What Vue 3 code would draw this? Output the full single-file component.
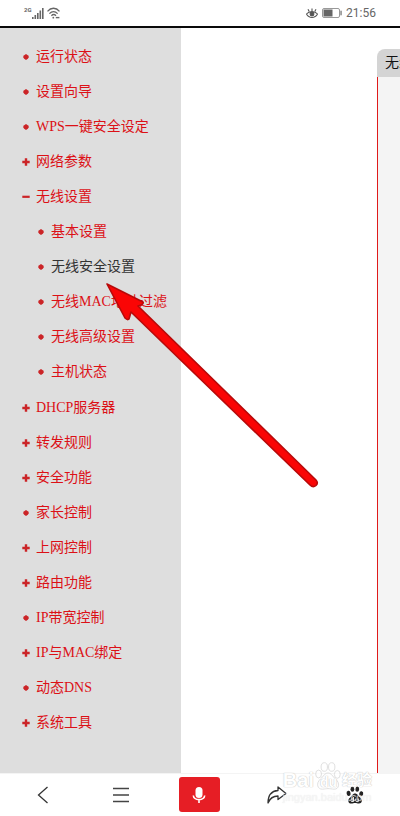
<template>
  <div class="screen">
    <header class="status-bar">
      <div class="status-left">
        <span class="net">2G</span>
        <svg class="signal" width="12" height="11" viewBox="0 0 12 11" fill="#666">
          <rect x="0" y="9" width="1.6" height="2" />
          <rect x="2.5" y="7" width="1.6" height="4" />
          <rect x="5" y="5" width="1.6" height="6" />
          <rect x="7.5" y="2.5" width="1.6" height="8.5" />
          <rect x="10" y="0" width="1.6" height="11" />
        </svg>
        <svg class="wifi" width="14" height="12" viewBox="0 0 14 12" fill="none" stroke="#666" stroke-width="1.3">
          <path d="M.5 4.3C4 .2 9 .2 12.5 4.3" />
          <path d="M2.4 6.6C4.9 4 8.1 4 10.6 6.6" />
          <path d="M4.4 8.7C5.8 7.3 7.6 7.3 9 8.7" />
          <circle cx="6.3" cy="10.7" r=".9" fill="#666" stroke="none" />
          <path d="M8.8 10.6h3.6" stroke-width="1.4" />
        </svg>
      </div>
      <div class="status-right">
        <svg class="eye" width="12" height="11" viewBox="0 0 12 11" fill="none" stroke="#555" stroke-width="1.1">
          <path d="M.5 6C3 2.8 9 2.8 11.5 6C9 10.6 3 10.6 .5 6z" />
          <circle cx="6" cy="6" r="1.9" fill="#555" />
          <path d="M6 3V.4M3.2 3.4L2 1.3M8.8 3.4L10 1.3" />
        </svg>
        <svg class="battery" width="20" height="10" viewBox="0 0 20 10">
          <rect x=".5" y=".5" width="17" height="9" rx="1.5" fill="#fff" stroke="#999" />
          <rect x="1.5" y="1.5" width="9" height="7" fill="#666" />
          <rect x="18.4" y="2.7" width="1.3" height="4.6" fill="#777" />
        </svg>
        <time>21:56</time>
      </div>
    </header>

    <main class="content">
      <nav class="sidebar">
        <ul class="menu">
          <li v-for="item in menu" :key="item.title">
            <a href="#" class="menu-link" @click.prevent="current = item.title">
              <svg class="mark" width="8" height="8" viewBox="0 0 8 8"><path :d="marks[item.mark]" /></svg>
              <span :class="{ active: current === item.title }">{{ item.title }}</span>
            </a>
            <ul v-if="item.children" class="submenu">
              <li v-for="child in item.children" :key="child">
                <a href="#" class="menu-link" @click.prevent="current = child">
                  <svg class="mark" width="8" height="8" viewBox="0 0 8 8"><path :d="marks.dot" /></svg>
                  <span :class="{ active: current === child }">{{ child }}</span>
                </a>
              </li>
            </ul>
          </li>
        </ul>
      </nav>
      <section class="panel">
        <h2 class="panel-tab">无线</h2>
        <div class="panel-body"></div>
      </section>
    </main>

    <footer class="toolbar">
      <button class="tool" aria-label="返回">
        <svg width="12" height="18" viewBox="0 0 12 18" fill="none" stroke="#333" stroke-width="1.3"><path d="M10.5 1L1.5 9l9 8" /></svg>
      </button>
      <button class="tool" aria-label="菜单">
        <svg width="16" height="16" viewBox="0 0 16 16" stroke="#444" stroke-width="1.3"><path d="M0 1.5h16M0 8h16M0 14.5h16" /></svg>
      </button>
      <button class="tool mic" aria-label="语音">
        <svg width="14" height="18" viewBox="0 0 14 18" fill="none">
          <rect x="3.5" y="1" width="7" height="11" rx="3.5" fill="#fff" />
          <path d="M1.3 9.5C2 15 12 15 12.7 9.5M7 13.5V17" stroke="#fff" stroke-width="1.6" />
        </svg>
      </button>
      <button class="tool" aria-label="分享">
        <svg width="20" height="18" viewBox="0 0 20 18" fill="none" stroke="#333" stroke-width="1.3" stroke-linejoin="round">
          <path d="M1 17C1 9 4 5 11 4.5V1L19 7.5L11 13.5V10C6 10 3 12 1 17z" />
        </svg>
      </button>
      <button class="tool" aria-label="百度">
        <svg width="18" height="18" viewBox="0 0 18 18" fill="#222">
          <ellipse cx="2.6" cy="7.4" rx="2" ry="2.6" transform="rotate(-12 2.6 7.4)" />
          <ellipse cx="6.4" cy="3.2" rx="1.9" ry="2.6" />
          <ellipse cx="11.3" cy="3.2" rx="1.9" ry="2.6" transform="rotate(8 11.3 3.2)" />
          <ellipse cx="15.2" cy="7.8" rx="2" ry="2.5" transform="rotate(12 15.2 7.8)" />
          <path d="M9 7.5C6.5 7.5 6.3 10 4.2 11.4C1.2 13.5 2 17.5 5.2 17.5C7 17.5 7.5 17 9 17s2.4.5 4 .5c3 0 4-3.6 1.2-6C12 10 11.5 7.5 9 7.5z" />
          <path d="M7.5 11v4.5H5.8c-1.4 0-1.4-2.6 0-2.6h1.7M9.8 12.5v2.2c0 .6.4.9 1 .9h1.5v-3.1" fill="none" stroke="#fff" stroke-width=".9" />
        </svg>
      </button>
    </footer>

    <svg class="pointer" width="216" height="208" viewBox="0 0 216 208">
      <path d="M3 2L39 20C40 22 37 23 34 24L212 198C216 202 210 207 206 203L27 30L25 37C24 38 22 37 21 36Z" fill="#fa0505" stroke="#b80a0a" stroke-width="1.6" stroke-linejoin="round" />
    </svg>

    <div class="watermark">
      <div class="brand">
        <span>Bai</span>
        <span class="paw">
          <svg width="28" height="28" viewBox="0 0 26 28" fill="#fff" stroke="#d4d4d4" stroke-width="1">
            <ellipse cx="3.6" cy="12" rx="2.9" ry="3.9" />
            <ellipse cx="9.3" cy="5" rx="3.2" ry="4.3" />
            <ellipse cx="16.7" cy="5" rx="3.2" ry="4.3" />
            <ellipse cx="22.3" cy="12.4" rx="2.9" ry="3.9" />
            <path d="M13 11C9.5 11 8.5 14.5 5.5 17C.5 21.3 2.5 27.5 7.5 27.2C10 27 11 26.6 13 26.6s3.5.4 6 .6c5 .2 6.5-6 1.5-10.2C17.5 14.5 16.5 11 13 11z" />
          </svg>
          <span class="du">du</span>
        </span>
        <span class="cn">经验</span>
      </div>
      <div class="site">jingyan.baidu.com</div>
    </div>
  </div>
</template>

<script setup>
import { ref } from 'vue'

const current = ref('无线安全设置')

const marks = {
  dot: 'M4 1L5.8 2.2L7 4L5.8 5.8L4 7L2.2 5.8L1 4L2.2 2.2Z',
  plus: 'M2.8 .3h2.4v2.5h2.5v2.4H5.2v2.5H2.8V5.2H.3V2.8h2.5z',
  minus: 'M.3 2.7h7.4v2.2H.3z',
}

const menu = [
  { title: '运行状态', mark: 'dot' },
  { title: '设置向导', mark: 'dot' },
  { title: 'WPS一键安全设定', mark: 'dot' },
  { title: '网络参数', mark: 'plus' },
  {
    title: '无线设置',
    mark: 'minus',
    children: ['基本设置', '无线安全设置', '无线MAC地址过滤', '无线高级设置', '主机状态'],
  },
  { title: 'DHCP服务器', mark: 'plus' },
  { title: '转发规则', mark: 'plus' },
  { title: '安全功能', mark: 'plus' },
  { title: '家长控制', mark: 'dot' },
  { title: '上网控制', mark: 'plus' },
  { title: '路由功能', mark: 'plus' },
  { title: 'IP带宽控制', mark: 'dot' },
  { title: 'IP与MAC绑定', mark: 'plus' },
  { title: '动态DNS', mark: 'dot' },
  { title: '系统工具', mark: 'plus' },
]
</script>

<style>
body { margin: 0; background: #fff; }
</style>

<style scoped>
.screen {
  position: relative;
  display: flex;
  flex-direction: column;
  min-height: 100vh;
  overflow: hidden;
  background: #fff;
  font-family: "Liberation Serif", "Noto Sans CJK SC", serif;
}

.status-bar {
  display: flex;
  justify-content: space-between;
  align-items: center;
  height: 26px;
  padding: 0 24px;
  border-bottom: 2px solid #0a0a0a;
  color: #666;
  font-family: Roboto, sans-serif;
}
.status-left { display: flex; align-items: flex-end; }
.net { align-self: flex-start; font-size: 6px; line-height: 6px; font-weight: 700; }
.wifi { margin-left: 3px; }
.status-right { display: flex; align-items: center; gap: 4px; }
.status-right time { font-size: 12px; line-height: 16px; }

.content { flex: 1; display: flex; justify-content: space-between; }
.sidebar { flex: 0 0 181px; background: #dedede; }
.menu, .submenu { list-style: none; margin: 0; padding: 0; }
.menu { padding: 11px 0 32px 22px; }
.submenu { padding: 0 0 1px 15px; }
.menu-link {
  display: flex;
  align-items: center;
  gap: 6px;
  height: 35px;
  color: #dc1016;
  font-size: 14px;
  line-height: 20px;
  text-decoration: none;
  white-space: nowrap;
}
.mark { fill: #cb2427; }
.active { color: #333; }

.panel {
  flex: 0 0 23px;
  display: flex;
  flex-direction: column;
  padding-top: 21px;
  overflow: hidden;
}
.panel-tab {
  margin: 0;
  padding-left: 8px;
  border-radius: 8px 0 0 0;
  background: #d4d4d4;
  color: #111;
  font-size: 14px;
  font-weight: 400;
  line-height: 28px;
  white-space: nowrap;
}
.panel-body { flex: 1; border-left: 1px solid #e01a1a; background: #f4f4f4; }

.toolbar {
  display: grid;
  grid-template-columns: repeat(5, 1fr);
  align-items: start;
  justify-items: center;
  height: 43px;
  padding: 3px 6px 0 4px;
  border-top: 1px solid #f4f4f4;
  box-sizing: border-box;
}
.tool {
  display: flex;
  align-items: center;
  justify-content: center;
  width: 41px;
  height: 35px;
  padding: 0;
  border: none;
  background: none;
}
.mic { border-radius: 3px; background: #e61e25; }

.pointer { position: absolute; left: 104px; top: 282px; pointer-events: none; }

.watermark {
  position: absolute;
  right: 28px;
  bottom: 12px;
  color: #fff;
  font-family: "Liberation Sans", "Noto Sans CJK SC", sans-serif;
  pointer-events: none;
  text-shadow: 0 0 1px #aaa, 0 0 1px #bbb;
  opacity: 0.7;
}
.brand { display: flex; align-items: flex-end; font-size: 20px; line-height: 20px; font-weight: 700; }
.paw { position: relative; display: flex; }
.du { position: absolute; left: 6px; bottom: 0; font-size: 14px; line-height: 16px; }
.cn { font-size: 15px; }
.site { color: #f4f4f4; font-size: 11px; line-height: 14px; text-shadow: 0 0 1px #ddd; }
</style>
